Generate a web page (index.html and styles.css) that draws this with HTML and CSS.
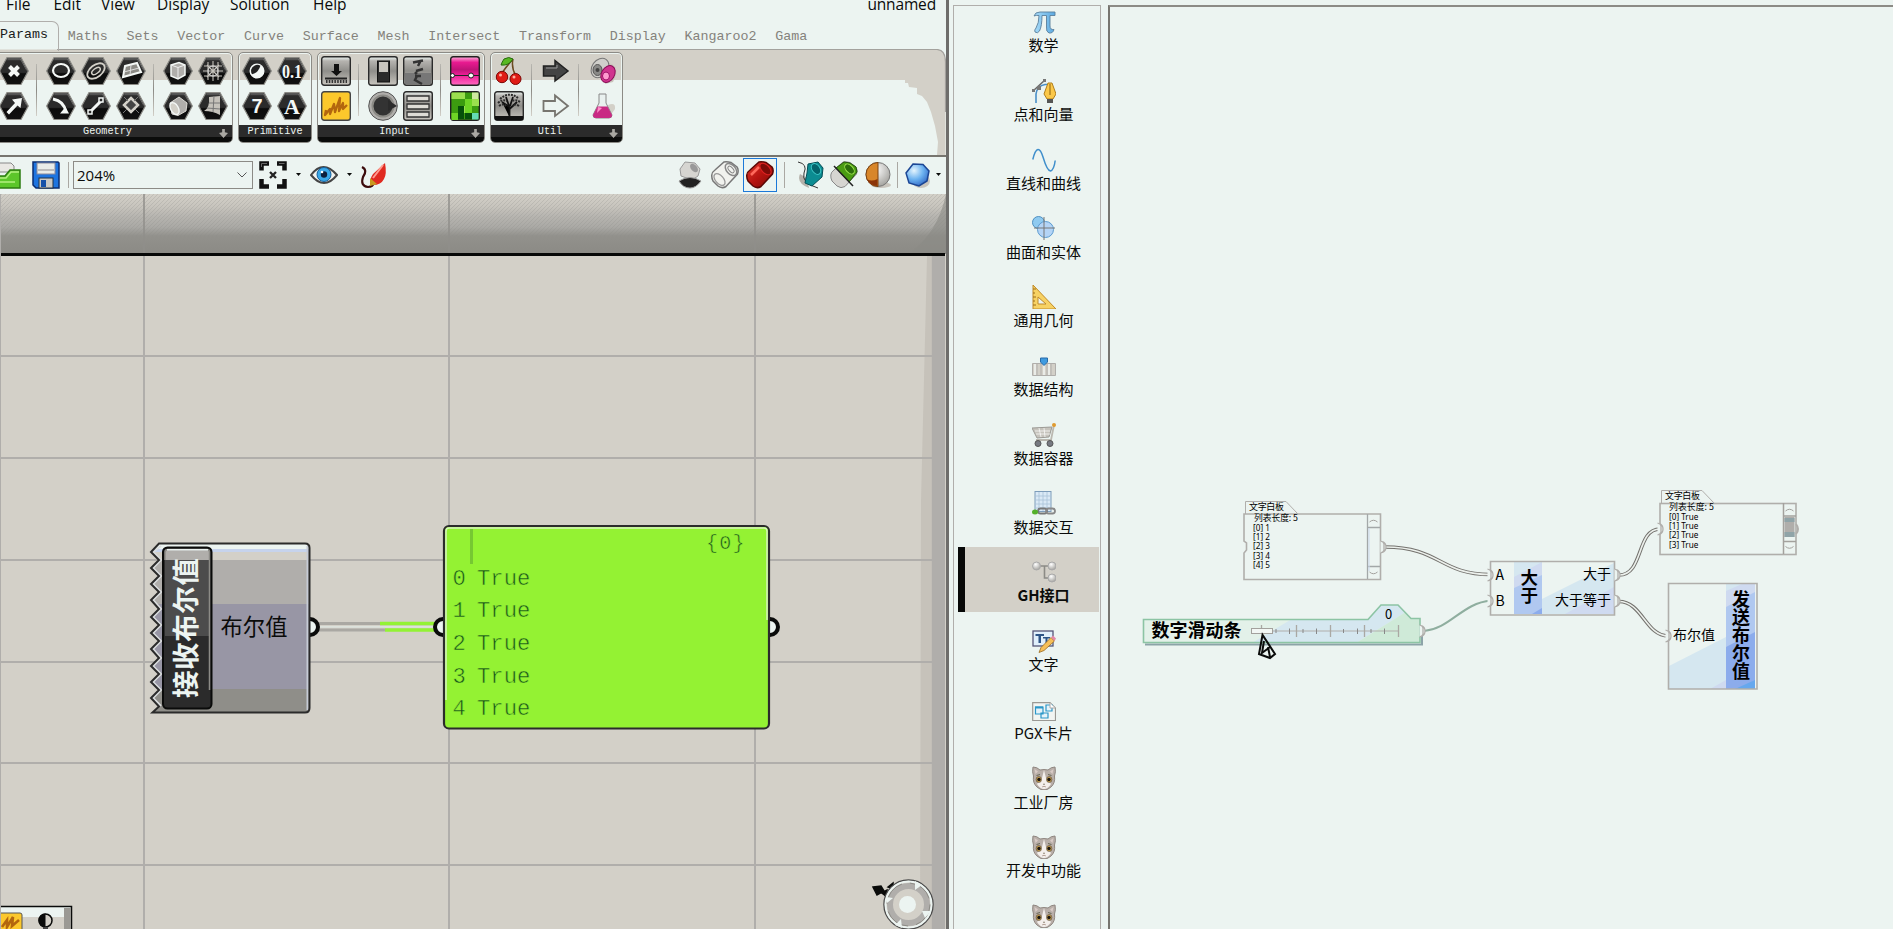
FILE: index.html
```html
<!DOCTYPE html>
<html lang="zh-CN">
<head>
<meta charset="utf-8">
<title>unnamed</title>
<link rel="stylesheet" href="styles.css">
</head>
<body>
<svg class="defs" width="0" height="0">
  <defs>
    <linearGradient id="gHex" x1="0" y1="0" x2="0" y2="1"><stop offset="0" stop-color="#4c4c4c"/><stop offset=".15" stop-color="#2b2b2b"/><stop offset=".55" stop-color="#2b2b2b"/><stop offset=".6" stop-color="#0c0c0c"/><stop offset="1" stop-color="#111"/></linearGradient>
    <linearGradient id="gTile" x1="0" y1="0" x2="0" y2="1"><stop offset="0" stop-color="#ecf4f1"/><stop offset=".15" stop-color="#b5b3af"/><stop offset=".5" stop-color="#8f8e8a"/><stop offset="1" stop-color="#c9c6bf"/></linearGradient>
    <linearGradient id="gPink" x1="0" y1="0" x2="0" y2="1"><stop offset="0" stop-color="#ffb0dc"/><stop offset=".2" stop-color="#e81a90"/><stop offset=".45" stop-color="#c01478"/><stop offset=".65" stop-color="#f0209a"/><stop offset="1" stop-color="#ff6ac0"/></linearGradient>
    <radialGradient id="gBlue" cx=".35" cy=".3" r=".8"><stop offset="0" stop-color="#e4f4fd"/><stop offset=".5" stop-color="#6cb2f0"/><stop offset="1" stop-color="#2a5fc0"/></radialGradient>
    <radialGradient id="gBall" cx=".4" cy=".3" r=".8"><stop offset="0" stop-color="#fff"/><stop offset="1" stop-color="#9a9994"/></radialGradient>
    <linearGradient id="gRed" x1="0" y1="0" x2="1" y2="1"><stop offset="0" stop-color="#e03a2c"/><stop offset=".5" stop-color="#b81410"/><stop offset="1" stop-color="#7c0b08"/></linearGradient>
    <linearGradient id="gSky" x1="0" y1="0" x2="1" y2="0"><stop offset="0" stop-color="#a8dcf8"/><stop offset="1" stop-color="#5aa8e0"/></linearGradient>
    <symbol id="hex" viewBox="0 0 30 30"><path d="M8 1.500H22L29.300 15 22 28.500H8L.7 15Z" fill="url(#gHex)" stroke="#8c8b86" stroke-width="1.200"/><path d="M8.600 3H21.400L27.800 14.500" fill="none" stroke="#777" stroke-width=".8"/></symbol>
    <symbol id="tile" viewBox="0 0 30 30"><rect x=".7" y=".7" width="28.600" height="28.600" rx="2.500" fill="url(#gTile)" stroke="#2b2b2b" stroke-width="1.400"/></symbol>
    <symbol id="cat" viewBox="0 0 24 24"><path d="M1 1Q5 1 8 4Q12 3 16 4Q19 1 23 1Q24 6 22.500 10Q23.500 17 19 21Q15 24.500 12 24Q9 24.500 5 21Q.5 17 1.500 10Q0 6 1 1Z" fill="#b9afa9" stroke="#8f8680" stroke-width="1"/><path d="M12 4L10 12 5 18Q8 23 12 23Q16 23 19 18L14 12Z" fill="#f4efec"/><path d="M2.500 3L6 5.500 3.500 8ZM21.500 3L18 5.500 20.500 8Z" fill="#d9cbc6"/><ellipse cx="6.800" cy="13.500" rx="2.700" ry="3" fill="#c9a24e" stroke="#554a40" stroke-width=".6"/><ellipse cx="17.200" cy="13.500" rx="2.700" ry="3" fill="#c9a24e" stroke="#554a40" stroke-width=".6"/><circle cx="7" cy="13.500" r="1.700" fill="#1c1713"/><circle cx="17" cy="13.500" r="1.700" fill="#1c1713"/><path d="M4.500 9.500L8 8.500M19.500 9.500L16 8.500" stroke="#665" stroke-width="1"/><path d="M11 18H13L12 19ZM10 21Q12 19.500 14 21" fill="#d08a8a" stroke="#998" stroke-width=".6"/></symbol>
    <symbol id="can" viewBox="0 0 28 28"><path d="M.8 14Q1 11 4 9L13 1Q16 .5 20 1.500L26 6Q28 9 26.500 13L15 25.500Q11 28 7 25L2 20Q.5 17 .8 14Z"/></symbol>
  </defs>
</svg>
<div class="desktop">
<main class="gh">
  <nav class="menu">
    <span class="m-file">File</span><span class="m-edit">Edit</span><span class="m-view">View</span><span class="m-display">Display</span><span class="m-solution">Solution</span><span class="m-help">Help</span><span class="doc">unnamed</span>
  </nav>
  <nav class="tabs">
    <span class="tab active">Params</span><span>Maths</span><span>Sets</span><span>Vector</span><span>Curve</span><span>Surface</span><span>Mesh</span><span>Intersect</span><span>Transform</span><span>Display</span><span>Kangaroo2</span><span>Gama</span>
    <i class="tab-edge"></i>
  </nav>
  <section class="ribbon">
    <svg class="ribbon-bg" viewBox="0 49 946 106"><path d="M0 49.500H937Q945.500 49.500 945.500 60V155H937L938 142 935 126 931 112 927 102 922 96 917 94 917 88 909 87 908 83 905 83V80H0Z" fill="#d3d0c8"/><path d="M57 49.500H937Q945.500 50 945.500 62V112" fill="none" stroke="#a3a19d" stroke-width="1.200"/></svg>
    <div class="group geometry">
      <div class="icons">
        <div class="cols one">
          <svg viewBox="0 0 30 30"><use href="#hex"/><path d="M10.500 10.500L19.500 19.500M19.500 10.500L10.500 19.500" stroke="#f4f8f6" stroke-width="4"/></svg>
          <svg viewBox="0 0 30 30"><use href="#hex"/><path d="M7.500 21L16 12 13 8.500 23 7 21.500 17 18.500 14.500 10 23.500Z" fill="#f4f8f6"/></svg>
        </div><i class="sep"></i>
        <div class="cols three">
          <svg viewBox="0 0 30 30"><use href="#hex"/><ellipse cx="15" cy="14.500" rx="8" ry="6.500" fill="none" stroke="#f4f8f6" stroke-width="2.200"/></svg>
          <svg viewBox="0 0 30 30"><use href="#hex"/><g fill="none" stroke="#d3d0c8" transform="rotate(-38 15 15)"><ellipse cx="15" cy="15" rx="10" ry="6" stroke-width="1.800"/><ellipse cx="15" cy="15" rx="5" ry="2.500" stroke-width="1.500"/></g></svg>
          <svg viewBox="0 0 30 30"><use href="#hex"/><path d="M9 10L21 7 25 16 7 21Z" fill="#8c8b86" stroke="#f4f8f6" stroke-width="2"/><path d="M15 9L14 19M8 16L23 12" stroke="#ddd"/></svg>
          <svg viewBox="0 0 30 30"><use href="#hex"/><path d="M7 8Q18 10 20 21" fill="none" stroke="#f4f8f6" stroke-width="2.800"/><path d="M14 22.500H23L19.500 16Z" fill="#f4f8f6"/></svg>
          <svg viewBox="0 0 30 30"><use href="#hex"/><path d="M10 20L20 10" stroke="#f4f8f6" stroke-width="3"/><path d="M7 19H11V23H7ZM18 7H22V11H18Z" fill="#2b2b2b" stroke="#f4f8f6" stroke-width="1.500"/></svg>
          <svg viewBox="0 0 30 30"><use href="#hex"/><path d="M15 7L22 14 15 21 8 14Z" fill="#444" stroke="#d3d0c8" stroke-width="2.500"/><path d="M8 6L12 10M22 6L18 10M7 22L11 18M23 22L19 18" stroke="#777"/></svg>
        </div><i class="sep"></i>
        <div class="cols two">
          <svg viewBox="0 0 30 30"><use href="#hex"/><path d="M8 9L16 6.500 22 9V19L15 23 8 20Z" fill="#b0aeab" stroke="#f4f8f6" stroke-width="1.500"/><path d="M8 9L15 11.500 22 9M15 11.500V23" stroke="#eee" fill="none"/></svg>
          <svg viewBox="0 0 30 30"><use href="#hex"/><path d="M10 6V24M20 6V24M15 5V25M6 10H24M6 20H24M5 15H25M9 9L21 21M21 9L9 21" stroke="#c5c2bb" stroke-width="1.100"/><circle cx="15" cy="15" r="5" fill="none" stroke="#ddd"/></svg>
          <svg viewBox="0 0 30 30"><use href="#hex"/><path d="M7 12L16 6 24 12 23 20 15 24.500 9 23Z" fill="#b0aeab" stroke="#dcdad4"/><ellipse cx="11.500" cy="17.500" rx="3.800" ry="6.500" transform="rotate(-30 11.500 17.500)" fill="#d3d0c8" stroke="#f4f8f6" stroke-width="1.300"/></svg>
          <svg viewBox="0 0 30 30"><use href="#hex"/><path d="M11 6L22 5 22 24Q15 20 6 20Q12 17 11 6Z" fill="#c5c2bb"/><path d="M16 5L15 21M11 12H22M9 17L22 18" stroke="#777"/></svg>
        </div>
      </div>
      <div class="caption wide"><span>Geometry</span><i class="more"></i></div>
    </div>
    <div class="group primitive">
      <div class="icons"><div class="cols two">
        <svg viewBox="0 0 30 30"><use href="#hex"/><circle cx="15" cy="15" r="6.500" fill="#f4f8f6" stroke="#f4f8f6" stroke-width="2"/><path d="M20 9.500A7.500 7.500 0 0 0 9.500 15Q9.500 19 11 20Q18 18 20 9.500Z" fill="#222" transform="rotate(4 15 15) scale(.86) translate(1 1.500)"/></svg>
        <svg viewBox="0 0 30 30"><use href="#hex"/><text x="15" y="21.500" class="glyph" font-size="19" textLength="20" lengthAdjust="spacingAndGlyphs">0.1</text></svg>
        <svg viewBox="0 0 30 30"><use href="#hex"/><text x="15" y="22" class="glyph sans" font-size="20">7</text></svg>
        <svg viewBox="0 0 30 30"><use href="#hex"/><text x="15" y="22.500" class="glyph" font-size="22">A</text></svg>
      </div></div>
      <div class="caption"><span>Primitive</span></div>
    </div>
    <div class="group input">
      <div class="icons">
        <div class="cols one">
          <svg viewBox="0 0 30 30"><use href="#tile"/><path d="M13 8H18V15H21L15.500 20 10 15H13Z" fill="#111"/><path d="M4 22.500H26" stroke="#222" stroke-width="2"/><path d="M5 25.500H26" stroke="#333" stroke-width="3" stroke-dasharray="1.500 1.300"/></svg>
          <svg viewBox="0 0 30 30"><rect x=".7" y=".7" width="28.600" height="28.600" rx="2.500" fill="#fcc82c" stroke="#444" stroke-width="1.400"/><path d="M5 19L4 24 9 18 9 23 13 13 14 21 19 7 18 20 22 12 22 18 26 14" fill="none" stroke="#b3660e" stroke-width="2.300" stroke-linejoin="round"/></svg>
        </div><i class="sep"></i>
        <div class="cols two">
          <svg viewBox="0 0 30 30"><use href="#tile"/><rect x="9.500" y="5" width="12" height="21" fill="#2b2b2b" stroke="#111"/><rect x="11" y="6" width="9" height="10" fill="#c9c6bf"/></svg>
          <svg viewBox="0 0 30 30"><use href="#tile"/><path d="M2 17H28V28H2Z" fill="#777"/><path d="M10 6.500L20 4.500M18 4L15 10M13 15L20 13M14 16L12 18M12 20H18M14 20L12 24 19 28" fill="none" stroke="#333" stroke-width="2.500"/></svg>
          <svg viewBox="0 0 30 30"><circle cx="15" cy="15" r="14.300" fill="#b0aeab" stroke="#555"/><circle cx="15" cy="15" r="10.500" fill="#333" stroke="#8c8b86" stroke-width="2"/><path d="M20 9L29 15 20 20Z" fill="#2b2b2b"/></svg>
          <svg viewBox="0 0 30 30"><use href="#tile"/><path d="M4 5H26V10H4ZM4 13H26V18H4ZM4 21H26V26H4Z" fill="#dedcd6" stroke="#333" stroke-width="1.300"/></svg>
        </div><i class="sep"></i>
        <div class="cols one">
          <svg viewBox="0 0 30 30"><rect x=".7" y=".7" width="28.600" height="28.600" rx="2.500" fill="url(#gPink)" stroke="#222" stroke-width="1.400"/><path d="M1 19.500H29" stroke="#222" stroke-width="1.200"/><circle cx="2.500" cy="19.500" r="2" fill="#fff" stroke="#222"/><circle cx="21" cy="19.500" r="2.500" fill="#fff" stroke="#222"/></svg>
          <svg viewBox="0 0 30 30"><rect x=".7" y=".7" width="28.600" height="28.600" rx="2.500" fill="#3c9c10" stroke="#222" stroke-width="1.400"/><path d="M1.500 1.500H15V8H1.500ZM8 15H15V22H8ZM22 8H29V15H22Z" fill="#9be04e"/><path d="M15 8H22V22H15ZM1.500 22H8V29H1.500Z" fill="#6ed425"/><path d="M8 15H14V28H8ZM15 22H22V28H15Z" fill="#06500a"/><path d="M22 1.500H28.500V8H22Z" fill="#cfeaa0"/><path d="M22 22H28.500V28.500H22Z" fill="#65dcb5"/></svg>
        </div>
      </div>
      <div class="caption wide"><span>Input</span><i class="more"></i></div>
    </div>
    <div class="group util">
      <div class="icons">
        <div class="cols one">
          <svg viewBox="0 0 30 30"><path d="M8 17Q12 11 19 3Q17 12 22 20" fill="none" stroke="#6b4b22" stroke-width="1.500"/><path d="M19 3Q15 0 10 3 8 6 7 9 15 10 19 3Z" fill="#58b822" stroke="#276b0e"/><circle cx="8" cy="21" r="5.700" fill="#df1c16" stroke="#7c0806"/><circle cx="21.500" cy="23" r="5.500" fill="#df1c16" stroke="#7c0806"/><circle cx="6.500" cy="19" r="1.500" fill="#ffb0a0"/><circle cx="20" cy="21" r="1.500" fill="#ffb0a0"/></svg>
          <svg viewBox="0 0 30 30"><use href="#tile"/><path d="M1 25H29V29H1Z" fill="#111"/><path d="M15.500 26V16L8 11M15.500 18L23 11M15 15L12 6M16 15L19 6" stroke="#111" stroke-width="1.800"/><path d="M6 8Q15 0 24 7M4 12Q8 8 13 10M26 11Q22 8 18 10M5 15Q9 12 12 15M25 15Q21 12 19 15" fill="none" stroke="#2b2b2b" stroke-width="2" stroke-dasharray="2 1"/></svg>
        </div><i class="sep"></i>
        <div class="cols one">
          <svg viewBox="0 0 30 30"><path d="M2.500 10H14V4.500L27 15 14 25V20H2.500Z" fill="#444" stroke="#222" stroke-width="1.500"/><path d="M5 12H16V9" fill="none" stroke="#999"/></svg>
          <svg viewBox="0 0 30 30"><path d="M2.500 10H14V4.500L27 15 14 25V20H2.500Z" fill="#ecf4f1" stroke="#77756f" stroke-width="1.800"/></svg>
        </div><i class="sep"></i>
        <div class="cols one">
          <svg viewBox="0 0 30 30"><path d="M21 7Q30 9 28 19L25 26 17 28Z" fill="#c9c4bb"/><ellipse cx="12" cy="12" rx="8" ry="10.500" transform="rotate(35 12 12)" fill="#d0cfcb" stroke="#777"/><ellipse cx="9.500" cy="14" rx="4.500" ry="5.500" fill="#8a8a88" stroke="#555"/><circle cx="9.500" cy="14" r="2" fill="#444"/><ellipse cx="20" cy="18" rx="6.500" ry="9" transform="rotate(30 20 18)" fill="#d0348e" stroke="#8a0c56"/><ellipse cx="18" cy="20" rx="3.500" ry="4" fill="#ff9ad0" stroke="#a01068"/></svg>
          <svg viewBox="0 0 30 30"><path d="M20 14Q28 11 27 18L22 25Z" fill="#d3d0c8"/><path d="M11 3H18V12L24 24Q24 27 21 27H8Q5 27 5 24L11 12Z" fill="#e9f1ef" stroke="#888"/><path d="M9.500 15.500H19.500L24 24Q24 27 21 27H8Q5 27 5 24Z" fill="#c92a84"/><path d="M10 16L9 22 14 17" fill="#ff8cc8"/></svg>
        </div>
      </div>
      <div class="caption wide"><span>Util</span><i class="more"></i></div>
    </div>
  </section>
  <section class="toolbar">
    <svg class="open" viewBox="0 0 28 28"><path d="M0 2H18L21 5V11H0Z" fill="#e9e8e4" stroke="#888"/><path d="M0 15H12L17 9H27V27H0Z" fill="#5cc62a" stroke="#2c7c12" stroke-width="1.500"/><path d="M0 17H13L18 11H26M0 21H22" stroke="#b2f080" stroke-width="1.500" fill="none"/></svg>
    <svg viewBox="0 0 28 28"><path d="M1 1H26L27 2V27H4L1 24Z" fill="#1d74e0" stroke="#0a2c70" stroke-width="1.500"/><rect x="5" y="2" width="18" height="11" fill="#e9ece9" stroke="#889"/><path d="M6 9H22" stroke="#bbb" stroke-width="2"/><rect x="7" y="17" width="14" height="10" fill="#c9c8c4" stroke="#234"/><rect x="9" y="19" width="5" height="7" fill="#1550a8"/></svg>
    <i class="rule"></i>
    <div class="combo"><span>204%</span><svg viewBox="0 0 10 6"><path d="M.5 .5L5 5 9.500 .5" fill="none" stroke="#555" stroke-width="1"/></svg></div>
    <svg viewBox="0 0 28 28"><path d="M2.500 9.500V2.500H10M18 2.500H25.500V9.500M25.500 18V25.500H18M10 25.500H2.500V18" fill="none" stroke="#111" stroke-width="4.500"/><path d="M2.500 6V2.500H8M20 2.500H25.500" fill="none" stroke="#666" stroke-width="1"/><path d="M11 11L17 17M17 11L11 17" stroke="#222" stroke-width="2.300"/></svg>
    <i class="drop"></i>
    <svg viewBox="0 0 28 28"><path d="M1 14Q13 -2 27 14Q14 30 1 14Z" fill="#f2f2ee" stroke="#444" stroke-width="2"/><circle cx="14" cy="13.500" r="7" fill="#3aa8e8" stroke="#16609c"/><circle cx="14" cy="13.500" r="3.200" fill="#0d1f3c"/><circle cx="12" cy="11" r="1.300" fill="#fff"/></svg>
    <i class="drop"></i>
    <svg viewBox="0 0 28 28"><path d="M3 6Q9 9 4 16Q1 25 9 26Q14 26 15 21" fill="none" stroke="#3c0b0c" stroke-width="2.200"/><path d="M26 2Q28 13 25 18Q22 24 14 24Q9 20 14 13Z" fill="#e02a20"/><path d="M24 4L14 17" stroke="#ff9c90" stroke-width="2"/><path d="M11 17L18 23 11 25Z" fill="#c9981e"/></svg>
    <i></i>
    <svg viewBox="0 0 28 28"><path d="M4 8L9 1 19 2 24 8 22 15 16 19 5 15Z" fill="#d6d5d1" stroke="#999"/><ellipse cx="18" cy="7" rx="3" ry="5" transform="rotate(-40 18 7)" fill="#999"/><path d="M3 20Q14 13 25 20Q20 27 14 27Q7 27 3 20Z" fill="#222" stroke="#999"/></svg>
    <svg viewBox="0 0 28 28"><use href="#can" fill="#f1f2ee" stroke="#777" stroke-width="1.500"/><ellipse cx="20" cy="8.500" rx="4.500" ry="7" transform="rotate(-42 20 8.500)" fill="none" stroke="#888" stroke-width="1.500"/><ellipse cx="20" cy="8.500" rx="2" ry="4" transform="rotate(-42 20 8.500)" fill="none" stroke="#888"/><ellipse cx="8.500" cy="18.500" rx="4" ry="7" transform="rotate(-42 8.500 18.500)" fill="none" stroke="#999" stroke-width="1.300"/></svg>
    <div class="selected"><svg viewBox="0 0 28 28"><use href="#can" fill="url(#gRed)" stroke="#5a0705" stroke-width="1.500"/><ellipse cx="19.500" cy="8" rx="4" ry="7" transform="rotate(-42 19.500 8)" fill="#7c0b08" stroke="#d22"/><path d="M5 14L13 6" stroke="#ff6a5c" stroke-width="2.500"/></svg></div>
    <i class="rule"></i>
    <svg viewBox="0 0 28 28"><path d="M3 13Q-1 22 12 27L10 17Z" fill="#b5b1aa"/><path d="M1 1Q11 3 7 12Q4 22 21 27" fill="none" stroke="#333"/><path d="M11 3L21 1 26 7 25 16 15 25 8 22 10 12Z" fill="#0c8c92" stroke="#054e56"/><ellipse cx="19" cy="8" rx="4" ry="6" transform="rotate(-35 19 8)" fill="#04646c" stroke="#3cc4c4"/></svg>
    <svg viewBox="0 0 28 28"><use href="#can" fill="#d6d5d1" stroke="#888"/><path d="M6 7L14 1 20 2 26 6 27 11 19 21Z" fill="#4a9c12" stroke="#24560a"/><ellipse cx="19.500" cy="8" rx="3.500" ry="6" transform="rotate(-42 19.500 8)" fill="#2c6e0a" stroke="#9be04e"/><path d="M4 5L23 25" stroke="#222" stroke-width="1.500"/></svg>
    <svg viewBox="0 0 28 28"><ellipse cx="17" cy="24" rx="10" ry="3" fill="#c9c5bd"/><circle cx="14" cy="13.500" r="12" fill="url(#gBall)" stroke="#777"/><path d="M14 1.500A12 12 0 0 0 14 25.500Z" fill="#d8862a" stroke="#7c4210"/><path d="M3 18Q7 21 13.500 18V25Q6 25 3 18Z" fill="#8c3408"/></svg>
    <i class="rule"></i>
    <svg viewBox="0 0 28 28"><ellipse cx="17" cy="20" rx="9" ry="7" fill="#c9c5bd"/><path d="M9 3L19 3.500 25 10 23 20 15 25 5 22 2 12Z" fill="url(#gBlue)" stroke="#1c4694" stroke-width="1.500"/></svg>
    <i class="drop"></i>
  </section>
  <svg class="canvas" viewBox="0 194 946 735">
    <defs>
      <linearGradient id="gTop" x1="0" y1="0" x2="0" y2="1"><stop offset="0" stop-color="#d3d0c8"/><stop offset=".2" stop-color="#c8c5be"/><stop offset=".38" stop-color="#b6b4af"/><stop offset=".55" stop-color="#aaa9a5"/><stop offset=".7" stop-color="#92918c"/><stop offset="1" stop-color="#8b8a85"/></linearGradient>
      <pattern id="hatch" width="4" height="4" patternUnits="userSpaceOnUse"><path d="M-1 1L1 -1M-1 5L5 -1M3 5L5 3" stroke="#8c8b86" stroke-width="1" opacity=".25"/></pattern>
      <linearGradient id="gSide" x1="0" y1="0" x2="1" y2="0"><stop offset="0" stop-color="#c6c2ba"/><stop offset=".45" stop-color="#c6c2ba"/><stop offset=".5" stop-color="#b0aeab"/><stop offset="1" stop-color="#b0aeab"/></linearGradient>
    </defs>
    <rect x="0" y="194" width="946" height="735" fill="#d3d0c8"/>
    <path d="M927 256H945V929H920L921 500Z" fill="url(#gSide)"/>
    <path d="M0 356H945M0 458H945M0 560H945M0 662H945M0 763H945M0 865H945M144 256V929M449 256V929M755 256V929" stroke="#b0aeab" stroke-width="2"/>
    <rect x="0" y="194" width="946" height="60" fill="url(#gTop)"/>
    <rect x="0" y="194" width="946" height="42" fill="url(#hatch)"/>
    <path d="M144 194V253M449 194V253M755 194V253" stroke="#908f8b" stroke-width="1.500"/>
    <path d="M946 194V253H910Q938 232 946 194Z" fill="#8b8a85" opacity=".6"/>
    <rect x="0" y="253" width="945" height="3" fill="#070807"/>

    <g class="wire-left"><path d="M318 623.500H385M318 630H385" stroke="#aaa8a3" stroke-width="3"/><path d="M380 623.500H440M385 630H440" stroke="#93f235" stroke-width="3.500"/><path d="M318 626.800H440" stroke="#dce2dc" stroke-width="1.800"/></g>
    <g fill="#ecf4f1" stroke="#0a0b0a" stroke-width="4"><circle cx="310" cy="627" r="8"/><circle cx="443" cy="627" r="8"/><circle cx="770" cy="627" r="8"/></g>

    <g class="receiver">
      <clipPath id="rc"><path d="M159 543.500H305Q309.500 543.500 309.500 548V708Q309.500 712.500 305 712.500H152.500L159 706.500 151 698 159 690 151 682 159 674 151 666 159 658 151 649 159 641 151 633 159 625 151 617 159 609 151 600 159 592 151 584 159 576 151 568 159 560 151 552Z"/></clipPath>
      <g clip-path="url(#rc)">
        <path d="M150 543H310V549H150Z" fill="#ecf4f1"/><path d="M150 549H310V552H150Z" fill="#c6d3ec"/><path d="M150 552H310V560H150Z" fill="#d3d0c8"/><path d="M150 560H310V604H150Z" fill="#b0aeab"/><path d="M150 604H310V689H150Z" fill="#9896a5"/><path d="M150 689H310V713H150Z" fill="#8f8e89"/>
        <path d="M307.500 546V710" stroke="#c6cbd6" stroke-width="2"/><path d="M161 546L153 552 161 560 153 568 161 576 153 584 161 592 153 600 161 609 153 617 161 625 153 633 161 641 153 649 161 658 153 666 161 674 153 682 161 690 153 698 161 706" fill="none" stroke="#dcdfe0" stroke-width="2"/>
      </g>
      <path d="M159 543.500H305Q309.500 543.500 309.500 548V708Q309.500 712.500 305 712.500H152.500L159 706.500 151 698 159 690 151 682 159 674 151 666 159 658 151 649 159 641 151 633 159 625 151 617 159 609 151 600 159 592 151 584 159 576 151 568 159 560 151 552Z" fill="none" stroke="#2b2b2b" stroke-width="2"/>
      <rect x="163" y="547.500" width="48.500" height="161" rx="4.500" fill="#2b2b2b" stroke="#0a0b0a" stroke-width="2"/>
      <path d="M165 560H210V636H165Z" fill="#4c4c4c"/><path d="M167 549H208L210 552V560H165V552Z" fill="#b0aeab"/><path d="M165 560V552Q165 549.500 168 549.500H207Q209.500 549.500 209.500 552V690" fill="none" stroke="#8c8b86" stroke-width="1.500"/><path d="M167 549.700H208" stroke="#ecf4f1" stroke-width="1.500"/>
      <text class="cjk b" transform="translate(196 698) rotate(-90)" font-size="27.500" textLength="140" fill="#ecf4f1">接收布尔值</text>
      <text class="cjk" x="220.500" y="635" font-size="22.300" textLength="67" fill="#0a0b0a">布尔值</text>
    </g>
    <g class="panel">
      <rect x="444" y="526" width="325" height="202.500" rx="5" fill="#94f233" stroke="#2b2b2b" stroke-width="2.200"/>
      <path d="M446 700V531Q446 528 449 528H764Q767 528 767 531V620" fill="none" stroke="#d8f4c0" stroke-width="1.500"/>
      <path d="M471.500 529V564" stroke="#76c832" stroke-width="3"/>
      <g class="mono thin" font-size="22.200" fill="#1c521c">
        <text x="706" y="549" font-size="20" letter-spacing="1.200">{0}</text>
        <text x="452.500" y="584.500">0</text><text x="477" y="584.500">True</text>
        <text x="452.500" y="617">1</text><text x="477" y="617">True</text>
        <text x="452.500" y="649.500">2</text><text x="477" y="649.500">True</text>
        <text x="452.500" y="682.500">3</text><text x="477" y="682.500">True</text>
        <text x="452.500" y="715">4</text><text x="477" y="715">True</text>
      </g>
    </g>
    <g class="compass">
      <path d="M873 887L881 886 884 891 877 895ZM882 893L887 890V897ZM888 887L893 883 893 889Z" fill="#0a0b0a" stroke="#0a0b0a" stroke-width="1.500"/>
      <circle cx="908.500" cy="904.500" r="24.500" fill="#d3d0c8" stroke="#4c4c4c" stroke-width="1.500"/><circle cx="908.500" cy="904.500" r="23" fill="none" stroke="#ecf4f1" stroke-width="2"/>
      <circle cx="908.500" cy="904.500" r="18.500" fill="none" stroke="#b0aeab" stroke-width="6"/><circle cx="908.500" cy="904.500" r="21.500" fill="none" stroke="#8c8b86" stroke-width="1" stroke-dasharray="26 8"/>
      <path d="M915 881L922 885 915 890ZM931 911L925 918 922 911ZM902 928L895 925 901 919ZM886 897L893 898 887 903Z" fill="#ecf4f1"/>
      <circle cx="907.500" cy="904.500" r="8.500" fill="#ecf4f1"/>
    </g>
    <g class="mini">
      <path d="M0 906.500H71.500V929H0Z" fill="#ecf4f1" stroke="#0a0b0a" stroke-width="1.500"/><path d="M1 917H71V929H1Z" fill="#d3d0c8"/><path d="M64 908H71V929H64Z" fill="#9a9994"/>
      <rect x="-6" y="913" width="28" height="28" rx="2" fill="#fcc82c" stroke="#555"/><path d="M2 927L7 920 7 927 13 917 12 926 19 920" fill="none" stroke="#b3660e" stroke-width="2.600"/>
      <circle cx="45.500" cy="920.500" r="6.500" fill="#d3d0c8" stroke="#0a0b0a" stroke-width="1.500"/><path d="M45.500 913.500A7 7 0 0 0 45.500 927.500Z" fill="#0a0b0a"/><path d="M43 928H48" stroke="#444" stroke-width="2"/>
    </g>
    <path d="M.5 194V929" stroke="#b0aeab"/>
  </svg>
</main>

<aside class="sidebar">
  <div class="item"><svg viewBox="0 0 24 24"><path d="M2 6Q3 2 8 2H23V5.500H18V16Q18 20 22 19.500Q21 23.500 17 23Q14 22 14.500 17V5.500H10Q10 16 7.500 21Q5.500 24 3 22Q2 20 4 18Q7 13 7 5.500Q4 5 2 6Z" fill="url(#gSky)" stroke="#5a7f9c" stroke-width=".9"/></svg><span>数学</span></div>
  <div class="item"><svg viewBox="0 0 24 24"><path d="M4 24V15Q5 7 13 5.500H17" fill="none" stroke="#4a8fc8" stroke-width="1.600"/><path d="M1 12L13 1" stroke="#666" stroke-width="1.500"/><path d="M5 7H9V11H5ZM11 0H14V3H11ZM0 10H3V13H0Z" fill="#777"/><path d="M16 4H20L24 15 21 20H15L12 15Z" fill="#fbc84a" stroke="#b07e1c"/><path d="M18 5V16" stroke="#8a6010"/><path d="M15 20H21V24H15Z" fill="#555"/></svg><span>点和向量</span></div>
  <div class="item"><svg viewBox="0 0 24 24"><path d="M.8 11.500C4 -2 8 -1 11 9C14 19 16 23 18.500 23Q22 22 23.200 12.500" fill="none" stroke="#3f8ecb" stroke-width="1.500"/></svg><span>直线和曲线</span></div>
  <div class="item"><svg viewBox="0 0 24 24"><circle cx="6.500" cy="6.500" r="6" fill="#8fcaf0" stroke="#4f8fc0"/><circle cx="13.500" cy="13.500" r="8" fill="#b4d4f6" stroke="#5b9bd0"/><path d="M12 1V24M2 12H23" stroke="#777" stroke-width="1"/></svg><span>曲面和实体</span></div>
  <div class="item"><svg viewBox="0 0 24 24"><path d="M1 0L24 24H1Z" fill="#f7d264" stroke="#c08a28"/><path d="M6 12V19H14Z" fill="#ecf4f1" stroke="#c08a28"/><path d="M1 4H4M1 8H3M1 12H4M1 16H3M1 20H4" stroke="#9c6c18"/></svg><span>通用几何</span></div>
  <div class="item"><svg viewBox="0 0 24 24"><path d="M.5 9.500H23.500V21.500H.5ZM5 10V21M9 10V21M15 10V21M19 10V21" fill="#d3d0c8" stroke="#b0aeab"/><path d="M3 10V21M12 10V21M17 10V21" stroke="#f2f5f2" stroke-width="1.500"/><path d="M8.500 4H15.500V8L12 11.500 8.500 8Z" fill="#3f9be0" stroke="#286aa8"/></svg><span>数据结构</span></div>
  <div class="item"><svg viewBox="0 0 24 24"><path d="M0 5L20 4 17 14 5 15Z" fill="#c6c3bc" stroke="#9c9a95"/><path d="M3 8H18M4 11H18M7 5L9 14M12 5L13 14" stroke="#fff" stroke-width=".7"/><path d="M22 2L19 17H4" fill="none" stroke="#bbb8b0" stroke-width="1.800"/><circle cx="22" cy="2" r="2" fill="#e09a30"/><circle cx="6" cy="20.500" r="3" fill="#777a82" stroke="#555"/><circle cx="18" cy="20.500" r="3" fill="#777a82" stroke="#555"/></svg><span>数据容器</span></div>
  <div class="item"><svg viewBox="0 0 24 24"><rect x="3" y=".5" width="16" height="20" fill="#dae9f6" stroke="#7d9cba"/><path d="M7 1V20M11 1V20M15 1V20M3 5H19M3 9H19M3 13H19M3 17H19" stroke="#a9c2d8" stroke-width=".8"/><rect x="6" y="17.500" width="9" height="5" rx="2.500" fill="none" stroke="#777" stroke-width="1.800"/><rect x="14" y="17.500" width="9" height="5" rx="2.500" fill="none" stroke="#888" stroke-width="1.800"/><ellipse cx="3" cy="21" rx="3" ry="2.500" fill="#54b02a"/></svg><span>数据交互</span></div>
  <div class="item on"><svg viewBox="0 0 24 24"><path d="M5 6H20M12.500 6V18H20" fill="none" stroke="#8c8b86" stroke-width="1.600"/><circle cx="4.500" cy="6" r="4" fill="url(#gBall)" stroke="#aaa"/><circle cx="20" cy="6" r="4" fill="url(#gBall)" stroke="#aaa"/><circle cx="20" cy="18" r="4" fill="url(#gBall)" stroke="#aaa"/></svg><span>GH接口</span></div>
  <div class="item"><svg viewBox="0 0 24 24"><rect x="1" y="2" width="20" height="15" fill="#e0effb" stroke="#557" stroke-width="1.300"/><path d="M3.500 5H12V7H9V14H6.500V7H3.500ZM11 8H18V9.500H15.500V14H13.500V9.500H11Z" fill="#2d5486"/><path d="M7 23.500L9 18.500 19 8.500 22.500 12 12 21.500Z" fill="#f6bf58" stroke="#9a6a20" stroke-width=".8"/><path d="M19 8.500L21 6.500 24 9.500 22.500 12Z" fill="#e28aa8"/></svg><span>文字</span></div>
  <div class="item"><svg viewBox="0 0 24 24"><path d="M.7 4.700H18L23.500 10V22.500H.7Z" fill="#f2f5f2" stroke="#9a9994" stroke-width="1.200"/><path d="M3.500 9H11V16H3.500ZM14 7H20V13H14ZM9 15H16V20H9Z" fill="#e4f3fa" stroke="#2a97c8" stroke-width="1.200"/><path d="M3 9.500H11" stroke="#2a97c8" stroke-width="2"/><path d="M18 5V10H23" fill="#fff" stroke="#aaa"/></svg><span>PGX卡片</span></div>
  <div class="item"><svg viewBox="0 0 24 24"><use href="#cat"/></svg><span>工业厂房</span></div>
  <div class="item"><svg viewBox="0 0 24 24"><use href="#cat"/></svg><span>开发中功能</span></div>
  <div class="item"><svg viewBox="0 0 24 24"><use href="#cat"/></svg></div>
</aside>

<section class="flow">
  <svg viewBox="1110 7 783 922">
    <defs><g id="grip"><path d="M-2.500 -6Q1 -5 1 -3V3Q1 5 -2.500 6M-.5 -5.500Q3 -4 3 0Q3 4 -.5 5.500" fill="#ecf4f1" stroke="#b0aeab" stroke-width="1.300"/></g></defs>
    <g fill="none">
      <g stroke="#74726e" stroke-width="3.600"><path d="M1385 547C1440 547 1440 574.500 1490 574.500"/><path d="M1619 575C1644 575 1636 529 1660 529"/><path d="M1619 601.500C1642 601.500 1646 636 1668 636"/></g>
      <g stroke="#ecf0ec" stroke-width="1.600"><path d="M1385 547C1440 547 1440 574.500 1490 574.500"/><path d="M1619 575C1644 575 1636 529 1660 529"/><path d="M1619 601.500C1642 601.500 1646 636 1668 636"/></g>
      <path d="M1424 631C1450 629 1462 603 1491 600.500" stroke="#8fae9f" stroke-width="2"/>
    </g>
    <g class="board">
      <path d="M1245.500 514V501.500H1286L1298 514" fill="#ecf4f1" stroke="#b0aeab"/>
      <path d="M1244 514H1380.500V579.500H1244V553L1246.500 550V543L1244 541Z" fill="#ecf4f1" stroke="#b0aeab" stroke-width="1.600"/>
      <path d="M1367.500 514V579M1367.500 527.500H1380M1367.500 566.500H1380" stroke="#a3a8a8" stroke-width="1.300"/><path d="M1369 528V571" stroke="#ccd9ee" stroke-width="1"/><path d="M1369.500 522Q1373.500 518.500 1377.500 522M1369.500 572Q1373.500 575.500 1377.500 572" fill="none" stroke="#a3a19d"/>
      <use href="#grip" x="1383" y="547"/>
      <g class="rows" font-size="8.200"><text class="cjk" x="1249" y="510" font-size="9" textLength="35">文字白板</text><text class="cjk" x="1254" y="520.500" font-size="8.800" textLength="44">列表长度: 5</text><text x="1253" y="530.500">[0] 1</text><text x="1253" y="539.500">[1] 2</text><text x="1253" y="549">[2] 3</text><text x="1253" y="558.500">[3] 4</text><text x="1253" y="568">[4] 5</text></g>
    </g>
    <g class="slider">
      <clipPath id="sc"><path d="M1143.500 619.500H1368L1381 605H1398L1411 618.500H1420V642.500H1143.500Z"/></clipPath>
      <path d="M1145 644.500H1422V626" fill="none" stroke="#8ca3a8" stroke-width="2"/>
      <g clip-path="url(#sc)"><path d="M1143 600H1425V650H1143Z" fill="#e3f1e9"/><path d="M1292 619L1340 600H1425L1345 650H1240Z" fill="#d5e7f0"/><path d="M1425 600L1345 650H1425Z" fill="#cfead8"/></g>
      <path d="M1143.500 619.500H1368L1381 605H1398L1411 618.500H1420V642.500H1143.500Z" fill="none" stroke="#8cc4a4" stroke-width="1.600"/>
      <path d="M1273 631H1398" stroke="#b0aeab"/><path d="M1261.500 625V628M1296.500 625V637M1330.500 625V637M1364.500 625V637M1398.500 625V637" stroke="#aaa8a3" stroke-width="1.300"/><path d="M1276 629V633M1289.500 628.500V634M1303 629V633M1316.500 628.500V634M1343.500 629V633M1357.500 628.500V634M1371 629V633M1384.500 628.500V634" stroke="#888"/>
      <rect x="1251.500" y="628.500" width="21" height="5" fill="#f2f7f4" stroke="#a3a19d"/>
      <use href="#grip" x="1422" y="631"/>
      <text class="cjk b" x="1151.500" y="637" font-size="18" textLength="90">数字滑动条</text><text class="cjk" x="1385" y="618.500" font-size="13">0</text>
    </g>
    <path d="M1262.500 635L1259 654 1270 658 1275 654ZM1264 641L1262 653 1270 647M1268 647L1270 657" fill="none" stroke="#0a0b0a" stroke-width="2"/>
    <g class="compare">
      <path d="M1490.500 561.500H1614.500V615H1490.500Z" fill="#ecf4f1"/><path d="M1614 563V614H1542V599Z" fill="#d5e7f0"/><path d="M1614 587V614H1565Z" fill="#cfdaf0"/><path d="M1514 562H1542V614H1514Z" fill="#cfdaf0"/><path d="M1514 588L1542 575V614H1514Z" fill="#b0c8f0"/><path d="M1514 562H1542L1514 577Z" fill="#d5e7f0"/><path d="M1532 614L1542 608V614Z" fill="#8cacec"/>
      <path d="M1490.500 561.500H1614.500V615H1490.500Z" fill="none" stroke="#b0aeab" stroke-width="1.600"/>
      <use href="#grip" x="1490" y="575"/><use href="#grip" x="1490" y="601"/><use href="#grip" x="1617" y="575"/><use href="#grip" x="1617" y="601"/>
      <g class="cjk" font-size="14"><text x="1495.500" y="579.500">A</text><text x="1495.500" y="605.500">B</text><text x="1583" y="579">大于</text><text x="1555" y="605">大于等于</text></g>
      <g class="cjk b" font-size="17.500"><text x="1520.500" y="584">大</text><text x="1520.500" y="602">于</text></g>
    </g>
    <g class="board">
      <path d="M1661.500 503V490.500H1702L1714 503" fill="#ecf4f1" stroke="#b0aeab"/>
      <rect x="1660" y="503.500" width="136" height="51" fill="#ecf4f1" stroke="#b0aeab" stroke-width="1.600"/>
      <path d="M1783.500 503V554M1783.500 516H1796M1783.500 541.500H1796" stroke="#a3a19d" stroke-width="1.500"/><rect x="1784.500" y="517" width="10" height="20" fill="#b0aeab"/><path d="M1784.500 518H1794.500V522H1784.500ZM1784.500 532H1794.500V537H1784.500Z" fill="#90a4a8"/><path d="M1785.500 511Q1789.500 507.500 1793.500 511M1785.500 546.500Q1789.500 550 1793.500 546.500" fill="none" stroke="#a3a19d"/>
      <use href="#grip" x="1660" y="529"/><path d="M1796 524Q1800 529 1796 534" fill="none" stroke="#b0aeab" stroke-width="2"/>
      <g class="rows" font-size="8.200"><text class="cjk" x="1665" y="499" font-size="9" textLength="35">文字白板</text><text class="cjk" x="1669" y="509.500" font-size="8.800" textLength="45">列表长度: 5</text><text x="1669" y="519.500">[0] True</text><text x="1669" y="528.500">[1] True</text><text x="1669" y="538">[2] True</text><text x="1669" y="547.500">[3] True</text></g>
    </g>
    <g class="sender">
      <path d="M1668.500 583.500H1757V689H1668.500Z" fill="#ecf4f1"/><path d="M1669 666L1726 637V689H1669Z" fill="#d5e7f0"/><path d="M1710 689L1726 680V689Z" fill="#cfdaf0"/><path d="M1726 584H1755V689H1726Z" fill="#b0c8f0"/><path d="M1726 584H1755L1755 592 1726 607Z" fill="#cfdaf0"/><path d="M1726 647L1755 632V689H1726Z" fill="#8cacec"/><path d="M1735 689L1755 680V689Z" fill="#66a8ee"/><path d="M1726 584H1742L1726 591Z" fill="#d5e7f0"/>
      <path d="M1668.500 583.500H1757V689H1668.500Z" fill="none" stroke="#b0aeab" stroke-width="1.600"/>
      <use href="#grip" x="1668" y="636"/>
      <text class="cjk" x="1673" y="640" font-size="14">布尔值</text>
      <g class="cjk b" font-size="18"><text x="1732" y="606">发</text><text x="1732" y="624">送</text><text x="1732" y="642">布</text><text x="1732" y="660">尔</text><text x="1732" y="678">值</text></g>
    </g>
  </svg>
</section>
</div>
</body>
</html>
```
FILE: styles.css
```css
* { box-sizing: border-box; }
body { margin: 0; background: #ecf4f1; color: #0a0b0a; font-family: "Open Sans", "Noto Sans CJK SC", sans-serif; overflow: hidden; }
.defs { display: block; height: 0; }
.desktop { display: grid; grid-template-columns: 949px 4px 148px 7px 785px; height: 929px; overflow: hidden; }

.gh { grid-column: 1; border-right: 3px solid #6e6d6b; display: flex; flex-direction: column; height: 929px; }
.menu { height: 21px; display: flex; align-items: flex-start; padding-left: 6px; font-size: 15.5px; line-height: 22px; }
.menu span { margin-top: -7px; white-space: nowrap; flex: none; }
.m-file, .m-edit { width: 47.5px; }
.m-view { width: 56px; }
.m-display { width: 73px; }
.m-solution { width: 83px; }
.menu .doc { margin-left: auto; margin-right: 10px; letter-spacing: -.15px; }

.tabs { position: relative; height: 28px; display: flex; gap: 18.75px; font: 13.33px/31px "Liberation Mono", monospace; color: #84827c; }
.tabs .tab { width: 49px; color: #1a1b1a; line-height: 27px; }
.tab-edge { position: absolute; left: -8px; top: 0; width: 67px; height: 30px; border: 1px solid #b0aeab; border-bottom: 0; border-radius: 0 7px 0 0; z-index: 2; }

.ribbon { position: relative; height: 106px; display: flex; gap: 5px; padding: 3px 0 0; }
.ribbon-bg { position: absolute; left: 0; top: 0; width: 946px; height: 106px; z-index: -1; }
.group { height: 91px; border: 1px solid #8c8b86; border-radius: 5px; box-shadow: inset 0 0 0 1px #ecf4f1; display: flex; flex-direction: column; justify-content: space-between; overflow: hidden; flex: none; }
.geometry { margin-left: -5px; }
.icons { display: flex; padding: 3px 4px 0 3px; }
.cols { display: grid; gap: 5px; grid-template-rows: 30px 30px; }
.cols svg { width: 30px; height: 30px; display: block; }
.one { grid-template-columns: 30px; }
.two { grid-template-columns: 30px 30px; }
.three { grid-template-columns: 30px 30px 30px; }
.sep { width: 1px; height: 52px; margin: 8px 9px 0 7px; background: linear-gradient(#b8b6b0, #8c8b86 50%, #d3d0c8); }
.caption { height: 17px; margin: 0 -1px; background: linear-gradient(#2b2b2b 12px, #0b0c0b 12px); color: #ecf4f1; font: 10.2px/14px "Liberation Mono", monospace; text-align: center; position: relative; }
.caption.wide { padding-right: 13px; }
.more { position: absolute; right: 5px; top: 4px; width: 9px; height: 9px; background: #aaa8a3; clip-path: polygon(35% 0, 65% 0, 65% 35%, 100% 45%, 50% 100%, 0 45%, 35% 35%); }
.glyph { font-family: "Liberation Serif", serif; font-weight: bold; fill: #f4f8f6; text-anchor: middle; }
.sans { font-family: "Liberation Sans", sans-serif; }

.toolbar { height: 39px; padding-bottom: 2px; border-top: 2px solid #77756f; display: grid; grid-template-columns: 21px 11px 28px 8px 5px 180px 6px 28px 9px 14px 28px 9px 12px 28px 289px 28px 7px 28px 4px 34px 8px 12px 28px 5px 28px 6px 28px 6px 6px 28px 4px 6px; align-items: center; }
.toolbar > svg { width: 28px; height: 28px; display: block; }
.toolbar > :nth-child(1) { grid-column: 1; }
.toolbar > :nth-child(2) { grid-column: 3; }
.toolbar > :nth-child(3) { grid-column: 5; }
.toolbar > :nth-child(4) { grid-column: 6; }
.toolbar > :nth-child(5) { grid-column: 8; }
.toolbar > :nth-child(6) { grid-column: 10; }
.toolbar > :nth-child(7) { grid-column: 11; }
.toolbar > :nth-child(8) { grid-column: 13; }
.toolbar > :nth-child(9) { grid-column: 14; }
.toolbar > :nth-child(10) { grid-column: 15; }
.toolbar > :nth-child(11) { grid-column: 16; }
.toolbar > :nth-child(12) { grid-column: 18; }
.toolbar > :nth-child(13) { grid-column: 20; }
.toolbar > :nth-child(14) { grid-column: 21; justify-self: end; }
.toolbar > :nth-child(15) { grid-column: 23; }
.toolbar > :nth-child(16) { grid-column: 25; }
.toolbar > :nth-child(17) { grid-column: 27; }
.toolbar > :nth-child(18) { grid-column: 28; justify-self: end; }
.toolbar > :nth-child(19) { grid-column: 30; }
.toolbar > :nth-child(20) { grid-column: 32; }
.toolbar .open { margin-left: -7px; }
.rule { width: 1px; height: 26px; background: #aaa8a3; }
.combo { height: 28px; border: 1px solid #8c8b86; display: flex; align-items: center; justify-content: space-between; padding: 0 5px 0 3px; font-size: 15px; }
.combo svg { width: 10px; height: 6px; }
.drop { width: 5px; height: 3px; background: #0a0b0a; clip-path: polygon(0 0, 100% 0, 50% 100%); }
.selected { width: 34px; height: 34px; border: 1px solid #1c78d8; display: grid; place-items: center; }
.selected svg { width: 28px; height: 28px; }
.canvas { display: block; width: 946px; height: 735px; }
.cjk { font-family: "Noto Sans CJK SC", sans-serif; }
.rows { font-family: "Noto Sans", sans-serif; }
.b { font-weight: bold; }
.mono { font-family: "Liberation Mono", monospace; }
.thin { stroke: #94f233; stroke-width: .55px; }

.sidebar { grid-column: 3; margin-top: 5px; height: 924px; border: 1px solid #b0aeab; border-bottom: 0; overflow: hidden; padding-left: 4px; }
.item { height: 68.75px; padding: 13px 0 0 30px; width: 141px; display: flex; flex-direction: column; align-items: center; font: 15px/20px "Noto Sans CJK SC", sans-serif; }
.item:first-child { margin-top: -9px; }
.item svg { width: 24px; height: 24px; flex: none; }
.item span { margin-top: 1.4px; white-space: nowrap; }
.item.on { height: 65px; margin-bottom: 3.75px; background: #d3d0c8; border-left: 7px solid #070807; padding-left: 23px; font-weight: bold; }

.flow { grid-column: 5; margin-top: 5px; border-top: 2px solid #8c8b86; border-left: 2px solid #77756f; height: 924px; overflow: hidden; }
.flow svg { display: block; width: 783px; height: 922px; }
```
